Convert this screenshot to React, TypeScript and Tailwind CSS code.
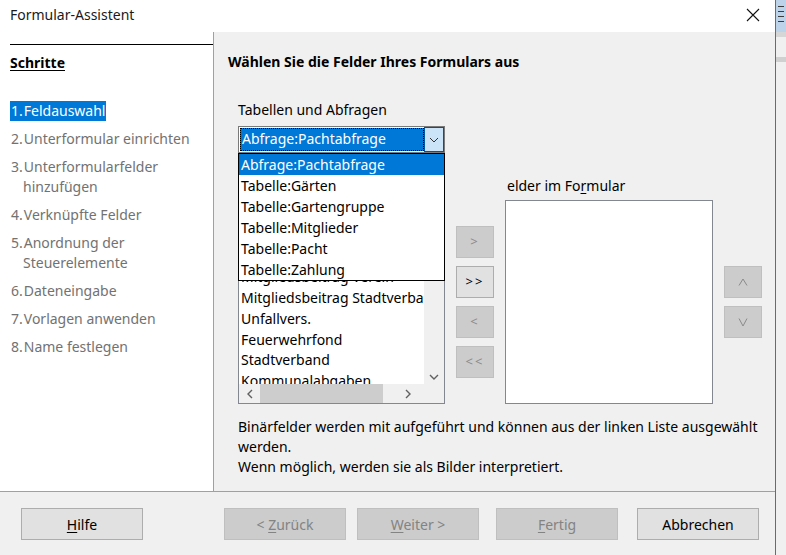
import React from 'react';

const font = { fontFamily: '"Noto Sans", "Open Sans", sans-serif' };

const steps = [
  { n: '1.', label: 'Feldauswahl', active: true },
  { n: '2.', label: 'Unterformular einrichten' },
  { n: '3.', label: 'Unterformularfelder', cont: 'hinzufügen' },
  { n: '4.', label: 'Verknüpfte Felder' },
  { n: '5.', label: 'Anordnung der', cont: 'Steuerelemente' },
  { n: '6.', label: 'Dateneingabe' },
  { n: '7.', label: 'Vorlagen anwenden' },
  { n: '8.', label: 'Name festlegen' },
];

const sources = [
  'Abfrage:Pachtabfrage',
  'Tabelle:Gärten',
  'Tabelle:Gartengruppe',
  'Tabelle:Mitglieder',
  'Tabelle:Pacht',
  'Tabelle:Zahlung',
];

const fields = [
  'ID',
  'Name',
  'Pacht',
  'Mitgliedsbeitrag Verein',
  'Mitgliedsbeitrag Stadtverband',
  'Unfallvers.',
  'Feuerwehrfond',
  'Stadtverband',
  'Kommunalabgaben',
];

function SmallButton({ children, enabled }: { children: React.ReactNode; enabled?: boolean }) {
  return (
    <div
      className={
        'w-[38px] h-[32px] flex items-center justify-center border text-[13px] tracking-[2px] ' +
        (enabled
          ? 'bg-[#e1e1e1] border-[#adadad] text-black'
          : 'bg-[#cccccc] border-[#bfbfbf] text-[#8a8a8a]')
      }
    >
      {children}
    </div>
  );
}

function FooterButton({ children, enabled }: { children: React.ReactNode; enabled?: boolean }) {
  return (
    <div
      className={
        'w-[122px] h-[32px] flex items-center justify-center border text-[14px] ' +
        (enabled
          ? 'bg-[#e1e1e1] border-[#adadad] text-black'
          : 'bg-[#cccccc] border-[#bfbfbf] text-[#838383]')
      }
    >
      {children}
    </div>
  );
}

export default function App() {
  return (
    <div className="w-[786px] h-[555px] flex bg-[#f0f0f0] overflow-hidden" style={font}>
      <div className="w-[775px] h-full flex flex-col">
        {/* title bar */}
        <div className="h-[32px] bg-white flex items-center justify-between pl-[10px] pr-[14px] shrink-0">
          <span className="text-[14px] text-[#1a1a1a] pb-[4px]">Formular-Assistent</span>
          <svg width="14" height="14" viewBox="0 0 14 14" className="mr-[1px] mb-[3px]">
            <path d="M1 1 L13 13 M13 1 L1 13" stroke="#111" strokeWidth="1.1" fill="none" />
          </svg>
        </div>

        {/* body */}
        <div className="h-[459px] flex shrink-0">
          <div className="w-[214px] bg-white border-r border-[#a0a0a0] shrink-0">
            <div className="ml-[10px] mt-[12px] w-[203px] h-px bg-black" />
            <div className="ml-[10px] mt-[7px] text-[14px] font-bold underline underline-offset-2 text-black">
              Schritte
            </div>
            <div className="mt-[28px] ml-[10px] flex flex-col gap-[8px]">
              {steps.map((s) => (
                <div key={s.n} className="text-[14px] leading-[20px]">
                  <span
                    className={
                      'inline-block px-px ' +
                      (s.active ? 'bg-[#0078d7] text-white' : 'text-[#727272]')
                    }
                  >
                    {s.n}
                    <span className="ml-[1px]">{s.label}</span>
                  </span>
                  {s.cont && <div className="pl-[13px] text-[#727272]">{s.cont}</div>}
                </div>
              ))}
            </div>
          </div>

          <div className="flex-1 pl-[14px] pt-[20px]">
            <div className="text-[14px] font-bold text-black leading-[20px]">
              Wählen Sie die Felder Ihres Formulars aus
            </div>
            <div className="ml-[10px] mt-[28px]">
              <div className="text-[14px] leading-[20px] text-black">Tabellen und Abfragen</div>
              <div className="relative mt-[6px] w-[207px] h-[27px] bg-white border border-[#7a7a7a] flex items-center z-10">
                <div className="flex-1 h-[23px] ml-px bg-[#0078d7] text-white text-[14px] leading-[21px] pl-[2px] outline outline-1 outline-dotted outline-black -outline-offset-1 whitespace-nowrap overflow-hidden">
                  Abfrage:Pachtabfrage
                </div>
                <div className="w-[20px] h-[25px] bg-[#cce4f7] border border-[#005499] flex items-center justify-center">
                  <svg width="10" height="6" viewBox="0 0 10 6">
                    <path d="M1 1 L5 5 L9 1" stroke="#333" strokeWidth="1" fill="none" />
                  </svg>
                </div>
                <div className="absolute left-[-1px] top-[26px] w-[207px] bg-white border border-black">
                  {sources.map((s, i) => (
                    <div
                      key={s}
                      className={
                        'h-[21px] text-[14px] leading-[21px] pl-[2px] whitespace-nowrap ' +
                        (i === 0 ? 'bg-[#0078d7] text-white' : 'text-black')
                      }
                    >
                      {s}
                    </div>
                  ))}
                </div>
              </div>

              <div className="mt-[23px] flex">
                <div className="w-[207px] shrink-0">
                  <div className="text-[14px] leading-[20px] h-[20px] text-black">Felder in der Tabelle</div>
                  <div className="mt-[4px] h-[204px] border border-[#828790] bg-[#f0f0f0] flex flex-col">
                    <div className="flex flex-1 overflow-hidden">
                      <div className="w-[185px] bg-white overflow-hidden pt-[3px]">
                        {fields.map((f) => (
                          <div key={f} className="h-[20.75px] text-[14px] leading-[21px] pl-[2px] whitespace-nowrap text-black">
                            {f}
                          </div>
                        ))}
                      </div>
                      <div className="flex-1 flex items-end justify-center pb-[4px]">
                        <svg width="10" height="6" viewBox="0 0 10 6">
                          <path d="M1 1 L5 5 L9 1" stroke="#606060" strokeWidth="1.4" fill="none" />
                        </svg>
                      </div>
                    </div>
                    <div className="h-[19px] flex items-center shrink-0">
                      <div className="w-[21px] flex justify-center">
                        <svg width="6" height="10" viewBox="0 0 6 10">
                          <path d="M5 1 L1 5 L5 9" stroke="#606060" strokeWidth="1.4" fill="none" />
                        </svg>
                      </div>
                      <div className="w-[123px] h-[19px] bg-[#cdcdcd]" />
                      <div className="flex-1 flex justify-center pr-[12px]">
                        <svg width="6" height="10" viewBox="0 0 6 10">
                          <path d="M1 1 L5 5 L1 9" stroke="#606060" strokeWidth="1.4" fill="none" />
                        </svg>
                      </div>
                    </div>
                  </div>
                </div>

                <div className="ml-[11px] pt-[50px] flex flex-col gap-[8px] shrink-0">
                  <SmallButton>&gt;</SmallButton>
                  <SmallButton enabled>&gt;&gt;</SmallButton>
                  <SmallButton>&lt;</SmallButton>
                  <SmallButton>&lt;&lt;</SmallButton>
                </div>

                <div className="ml-[11px] w-[208px] shrink-0">
                  <div className="text-[14px] leading-[20px] h-[20px] text-black whitespace-nowrap pl-[2px]">
                    elder im Fo<span className="underline underline-offset-2">r</span>mular
                  </div>
                  <div className="mt-[4px] h-[204px] border border-[#828790] bg-white" />
                </div>

                <div className="ml-[11px] pt-[90px] flex flex-col gap-[8px] shrink-0">
                  <SmallButton>
                    <svg width="10" height="8" viewBox="0 0 10 8">
                      <path d="M1 7.5 L5 1 L9 7.5" stroke="#8a8a8a" strokeWidth="1" fill="none" />
                    </svg>
                  </SmallButton>
                  <SmallButton>
                    <svg width="10" height="9" viewBox="0 0 10 9">
                      <path d="M1 0.5 L5 8 L9 0.5" stroke="#8a8a8a" strokeWidth="1" fill="none" />
                    </svg>
                  </SmallButton>
                </div>
              </div>

              <div className="mt-[13px] text-[14px] leading-[20px] text-black w-[530px]">
                Binärfelder werden mit aufgeführt und können aus der linken Liste ausgewählt werden.
                <br />
                Wenn möglich, werden sie als Bilder interpretiert.
              </div>
            </div>
          </div>
        </div>

        {/* footer */}
        <div className="flex-1 border-t border-[#a0a0a0] flex items-start pt-[16px] pl-[21px]">
          <FooterButton enabled>
            <span>
              <span className="underline underline-offset-2">H</span>ilfe
            </span>
          </FooterButton>
          <div className="ml-[81px]">
            <FooterButton>
              <span>
                &lt; <span className="underline underline-offset-2">Z</span>urück
              </span>
            </FooterButton>
          </div>
          <div className="ml-[11px]">
            <FooterButton>
              <span>
                <span className="underline underline-offset-2">W</span>eiter &gt;
              </span>
            </FooterButton>
          </div>
          <div className="ml-[17px]">
            <FooterButton>
              <span>
                <span className="underline underline-offset-2">F</span>ertig
              </span>
            </FooterButton>
          </div>
          <div className="ml-[19px]">
            <FooterButton enabled>Abbrechen</FooterButton>
          </div>
        </div>
      </div>

      {/* window edge and background window */}
      <div className="w-px h-full bg-[#6b6b6b]" />
      <div className="flex-1 h-full flex flex-col">
        <div className="h-[32px] bg-[#bcd3ea] flex flex-col gap-[4px] pt-[6px] pl-[2px]">
          <div className="w-[6px] h-px bg-[#3c3c3c]" />
          <div className="w-[6px] h-px bg-[#3c3c3c]" />
          <div className="w-[6px] h-px bg-[#3c3c3c]" />
          <div className="w-[6px] h-px bg-[#3c3c3c]" />
        </div>
        <div className="h-[5px] bg-[#d6d6d6]" />
        <div className="h-[20px] bg-[#f0f0f0]" />
        <div className="h-[5px] bg-[#d0d0d0]" />
        <div className="flex-1 bg-[#f0f0f0]" />
      </div>
    </div>
  );
}
